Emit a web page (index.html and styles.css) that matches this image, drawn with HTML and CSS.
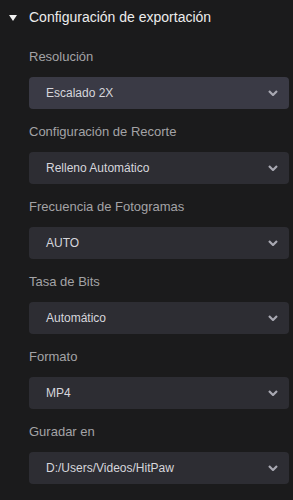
FILE: index.html
```html
<!DOCTYPE html>
<html lang="es">
<head>
    <meta charset="UTF-8">
    <meta name="viewport" content="width=device-width, initial-scale=1.0">
    <title>Configuración de exportación</title>
    <link rel="stylesheet" href="styles.css">
</head>
<body>
    <div class="panel">
        <div class="panel-header">
            <span class="caret"></span>
            <span class="panel-title">Configuración de exportación</span>
        </div>

        <div class="panel-body">
            <div class="field">
                <div class="field-label">Resolución</div>
                <div class="select select-hover">
                    <span>Escalado 2X</span>
                    <svg class="chevron" viewBox="0 0 10 6"><path d="M1 1 L5 5 L9 1"/></svg>
                </div>
            </div>

            <div class="field">
                <div class="field-label">Configuración de Recorte</div>
                <div class="select">
                    <span>Relleno Automático</span>
                    <svg class="chevron" viewBox="0 0 10 6"><path d="M1 1 L5 5 L9 1"/></svg>
                </div>
            </div>

            <div class="field">
                <div class="field-label">Frecuencia de Fotogramas</div>
                <div class="select">
                    <span>AUTO</span>
                    <svg class="chevron" viewBox="0 0 10 6"><path d="M1 1 L5 5 L9 1"/></svg>
                </div>
            </div>

            <div class="field">
                <div class="field-label">Tasa de Bits</div>
                <div class="select">
                    <span>Automático</span>
                    <svg class="chevron" viewBox="0 0 10 6"><path d="M1 1 L5 5 L9 1"/></svg>
                </div>
            </div>

            <div class="field">
                <div class="field-label">Formato</div>
                <div class="select">
                    <span>MP4</span>
                    <svg class="chevron" viewBox="0 0 10 6"><path d="M1 1 L5 5 L9 1"/></svg>
                </div>
            </div>

            <div class="field">
                <div class="field-label">Guradar en</div>
                <div class="select">
                    <span>D:/Users/Videos/HitPaw</span>
                    <svg class="chevron" viewBox="0 0 10 6"><path d="M1 1 L5 5 L9 1"/></svg>
                </div>
            </div>
        </div>
    </div>
</body>
</html>
```

FILE: styles.css
```css
body {
    margin: 0;
    background-color: #1b1b1c;
    font-family: "Liberation Sans", Arial, sans-serif;
    height: 100vh;
    overflow: hidden;
}

.panel {
    width: 100%;
}

.panel-header {
    height: 34px;
    display: flex;
    align-items: center;
    padding-left: 9px;
}

/* Expanded caret */
.caret {
    width: 0;
    height: 0;
    border-left: 4px solid transparent;
    border-right: 4px solid transparent;
    border-top: 6px solid #f0f0f0;
    margin-top: 1px;
    margin-right: 12px;
}

.panel-title {
    font-size: 14px;
    color: #ececec;
}

.panel-body {
    padding: 15px 4px 0 29px;
    display: flex;
    flex-direction: column;
    gap: 15px;
}

.field {
    display: flex;
    flex-direction: column;
    gap: 12px;
}

.field-label {
    font-size: 13px;
    line-height: 16px;
    color: #a3a3a6;
}

.select {
    height: 32px;
    border-radius: 4px;
    background-color: #2d2d33;
    display: flex;
    align-items: center;
    justify-content: space-between;
    padding: 0 11px 0 17px;
    font-size: 12px;
    color: #d6d6dc;
}

.select-hover {
    background-color: #3a3a45;
}

.chevron {
    width: 10px;
    height: 6px;
    fill: none;
    stroke: #a8a8b2;
    stroke-width: 2.2;
}
```
